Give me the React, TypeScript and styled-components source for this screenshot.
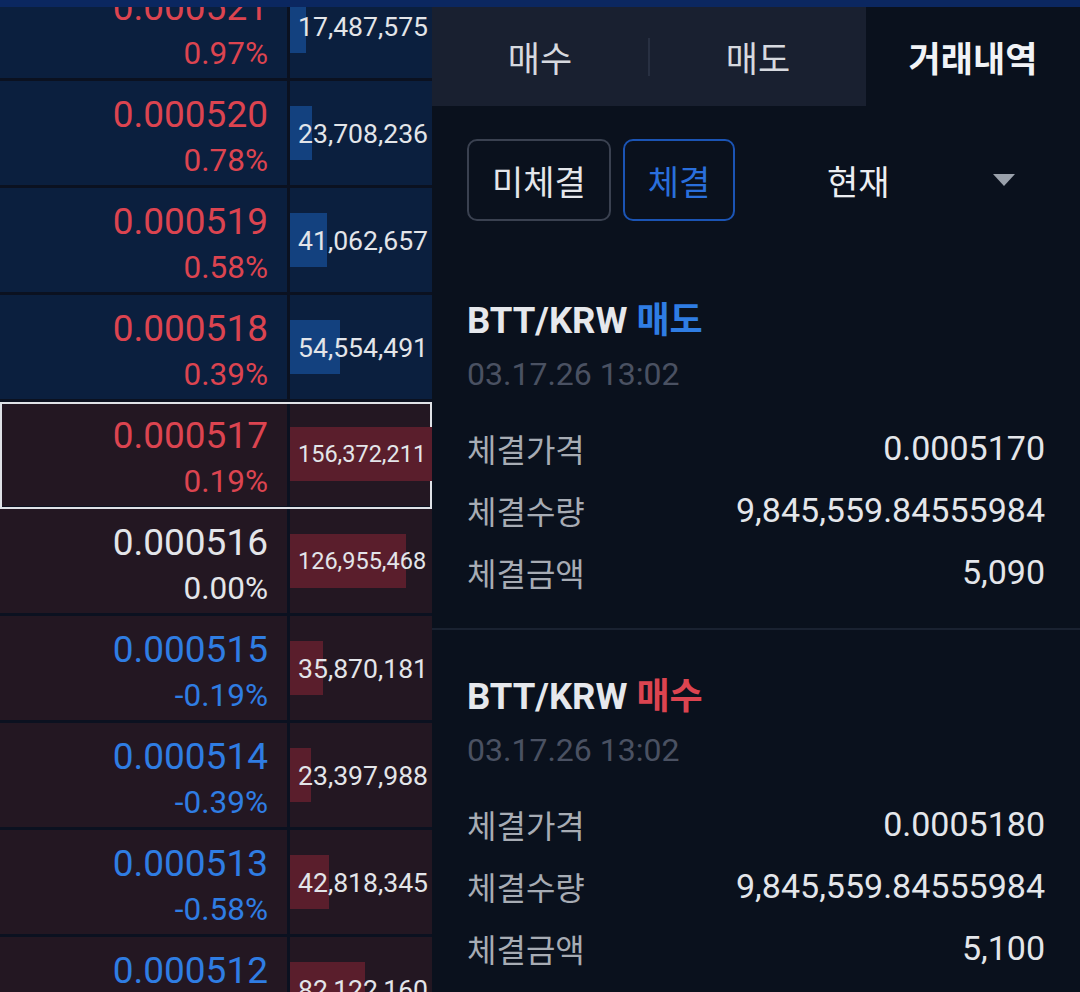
import styled, { createGlobalStyle } from "styled-components";

const GlobalStyle = createGlobalStyle`
  html, body {
    margin: 0;
    padding: 0;
    background: #0a111d;
  }
  body {
    font-family: Roboto, "Noto Sans CJK KR", sans-serif;
  }
`;

type Side = "sell" | "buy";

type BookRow = {
    price: string,
    pct: string,
    vol: string,
    side: Side,
    current?: boolean
}

const bookRows: BookRow[] = [
    { price: "0.000521", pct: "0.97%", vol: "17,487,575", side: "sell" },
    { price: "0.000520", pct: "0.78%", vol: "23,708,236", side: "sell" },
    { price: "0.000519", pct: "0.58%", vol: "41,062,657", side: "sell" },
    { price: "0.000518", pct: "0.39%", vol: "54,554,491", side: "sell" },
    { price: "0.000517", pct: "0.19%", vol: "156,372,211", side: "buy", current: true },
    { price: "0.000516", pct: "0.00%", vol: "126,955,468", side: "buy" },
    { price: "0.000515", pct: "-0.19%", vol: "35,870,181", side: "buy" },
    { price: "0.000514", pct: "-0.39%", vol: "23,397,988", side: "buy" },
    { price: "0.000513", pct: "-0.58%", vol: "42,818,345", side: "buy" },
    { price: "0.000512", pct: "-0.77%", vol: "82,122,160", side: "buy" },
];

type Trade = {
    pair: string,
    side: Side,
    date: string,
    price: string,
    qty: string,
    amount: string
}

const trades: Trade[] = [
    { pair: "BTT/KRW", side: "sell", date: "03.17.26 13:02", price: "0.0005170", qty: "9,845,559.84555984", amount: "5,090" },
    { pair: "BTT/KRW", side: "buy", date: "03.17.26 13:02", price: "0.0005180", qty: "9,845,559.84555984", amount: "5,100" },
];

const RED = "#dc4450";
const BLUE = "#2f7de3";
const WHITE = "#e3e5e9";
const LINE = "#0b1120";

const toneColor = (pct: string) => {
    const n = parseFloat(pct);
    if (n > 0) return RED;
    if (n < 0) return BLUE;
    return WHITE;
};

const Page = styled.div`
  width: 1080px;
  height: 992px;
  overflow: hidden;
  display: flex;
  flex-direction: column;
  background: #0a111d;
`;

const TopStrip = styled.div`
  height: 7px;
  flex-shrink: 0;
  background: #0b2760;
`;

const Body = styled.div`
  flex: 1;
  display: flex;
  min-height: 0;
`;

const OrderBook = styled.div`
  width: 432px;
  flex-shrink: 0;
  overflow: hidden;
  background: ${LINE};
`;

// list is scrolled, the first row sits partly under the top strip
const OrderList = styled.div`
  display: flex;
  flex-direction: column;
  margin-top: -33px;
`;

const Row = styled.div<{ $side: Side, $current?: boolean }>`
  position: relative;
  z-index: ${p => p.$current ? 2 : 0};
  display: flex;
  height: 107px;
  box-sizing: border-box;
  border-bottom: 3px solid ${LINE};
  background: ${p => p.$side === "sell" ? "#0b1f3e" : "#231722"};
  outline: ${p => p.$current ? "2px solid #dfe2e7" : "none"};
  outline-offset: -2px;
`;

const PriceCell = styled.div`
  width: 290px;
  box-sizing: border-box;
  border-right: 3px solid ${LINE};
  display: flex;
  flex-direction: column;
  align-items: flex-end;
  padding: 13px 19px 0 0;
`;

const Price = styled.div<{ $color: string }>`
  font-size: 37px;
  line-height: 42px;
  color: ${p => p.$color};
`;

const Pct = styled.div<{ $color: string }>`
  font-size: 31.5px;
  line-height: 38px;
  margin-top: 6px;
  color: ${p => p.$color};
`;

const VolCell = styled.div`
  flex: 1;
  position: relative;
  display: flex;
  align-items: center;
  padding-left: 8px;
`;

const VolBar = styled.div<{ $side: Side }>`
  position: absolute;
  left: 0;
  top: 50%;
  height: 54px;
  transform: translateY(-50%);
  background: ${p => p.$side === "sell" ? "#13417f" : "#5a1e2c"};
`;

const VolText = styled.span<{ $long: boolean }>`
  position: relative;
  font-size: ${p => p.$long ? "23.5px" : "26.6px"};
  color: ${WHITE};
  white-space: nowrap;
`;

const Panel = styled.div`
  flex: 1;
  display: flex;
  flex-direction: column;
  background: #0a111d;
`;

const Tabs = styled.div`
  display: flex;
  height: 99px;
  flex-shrink: 0;
`;

const TabGroup = styled.div`
  flex: 1;
  display: flex;
  align-items: center;
  background: #192030;
`;

const Tab = styled.div<{ $active?: boolean }>`
  flex: 1;
  height: 100%;
  display: flex;
  align-items: center;
  justify-content: center;
  font-size: 35px;
  font-weight: ${p => p.$active ? 700 : 400};
  color: ${p => p.$active ? "#f1f3f6" : "#d6d9df"};
`;

const LastTab = styled(Tab)`
  flex: 0 0 214px;
  background: #0a111d;
`;

const TabDivider = styled.div`
  width: 2px;
  height: 38px;
  background: #283042;
`;

const FilterRow = styled.div`
  display: flex;
  align-items: center;
  gap: 12px;
  padding: 33px 35px 33px;
`;

const FilterButton = styled.div<{ $active?: boolean }>`
  height: 82px;
  box-sizing: border-box;
  padding: 0 23px;
  display: flex;
  align-items: center;
  border: 2px solid ${p => p.$active ? "#1b54b4" : "#3a4150"};
  border-radius: 10px;
  font-size: 34px;
  color: ${p => p.$active ? "#2a6fdc" : "#e4e6ea"};
`;

const Dropdown = styled.div`
  flex: 1;
  height: 82px;
  display: flex;
  align-items: center;
`;

const DropLabel = styled.div`
  flex: 1;
  text-align: center;
  padding-right: 24px;
  font-size: 34px;
  color: #eceef1;
`;

const Caret = styled.svg`
  width: 22px;
  height: 12px;
  margin-right: 30px;
`;

const Card = styled.div`
  padding: 45px 35px 25px;
  border-bottom: 2px solid #1a2231;
`;

const CardTitle = styled.div`
  font-size: 36.5px;
  line-height: 44px;
  font-weight: 700;
  color: #e6e8ec;
`;

const SideTag = styled.span<{ $side: Side }>`
  color: ${p => p.$side === "sell" ? BLUE : RED};
  font-size: 36px;
`;

const DateText = styled.div`
  margin-top: 11px;
  font-size: 32px;
  line-height: 40px;
  color: #4a5162;
`;

const DetailList = styled.div`
  margin-top: 23px;
`;

const DetailRow = styled.div`
  height: 62px;
  display: flex;
  align-items: center;
  justify-content: space-between;
`;

const DetailLabel = styled.span`
  font-size: 32px;
  color: #a7acb4;
`;

const DetailValue = styled.span`
  font-size: 34px;
  color: #e4e6ea;
`;

const TradeCard = ({ trade }: { trade: Trade }) => (
    <Card>
        <CardTitle>
            {trade.pair} <SideTag $side={trade.side}>{trade.side === "sell" ? "매도" : "매수"}</SideTag>
        </CardTitle>
        <DateText>{trade.date}</DateText>
        <DetailList>
            <DetailRow>
                <DetailLabel>체결가격</DetailLabel>
                <DetailValue>{trade.price}</DetailValue>
            </DetailRow>
            <DetailRow>
                <DetailLabel>체결수량</DetailLabel>
                <DetailValue>{trade.qty}</DetailValue>
            </DetailRow>
            <DetailRow>
                <DetailLabel>체결금액</DetailLabel>
                <DetailValue>{trade.amount}</DetailValue>
            </DetailRow>
        </DetailList>
    </Card>
);

export default function App() {
    return (
        <>
            <GlobalStyle />
            <Page>
                <TopStrip />
                <Body>
                    <OrderBook>
                        <OrderList>
                            {bookRows.map(r => {
                                const color = toneColor(r.pct);
                                const volume = parseInt(r.vol.replace(/,/g, ""), 10);
                                return (
                                    <Row key={r.price} $side={r.side} $current={r.current}>
                                        <PriceCell>
                                            <Price $color={color}>{r.price}</Price>
                                            <Pct $color={color}>{r.pct}</Pct>
                                        </PriceCell>
                                        <VolCell>
                                            <VolBar $side={r.side} style={{ width: Math.min(142, volume * 0.00000091) }} />
                                            <VolText $long={r.vol.length > 10}>{r.vol}</VolText>
                                        </VolCell>
                                    </Row>
                                );
                            })}
                        </OrderList>
                    </OrderBook>
                    <Panel>
                        <Tabs>
                            <TabGroup>
                                <Tab>매수</Tab>
                                <TabDivider />
                                <Tab>매도</Tab>
                            </TabGroup>
                            <LastTab $active>거래내역</LastTab>
                        </Tabs>
                        <FilterRow>
                            <FilterButton>미체결</FilterButton>
                            <FilterButton $active>체결</FilterButton>
                            <Dropdown>
                                <DropLabel>현재</DropLabel>
                                <Caret viewBox="0 0 22 12">
                                    <path d="M0 0 H22 L11 12 Z" fill="#9aa1ab" />
                                </Caret>
                            </Dropdown>
                        </FilterRow>
                        {trades.map((t, i) => <TradeCard key={i} trade={t} />)}
                    </Panel>
                </Body>
            </Page>
        </>
    );
}
